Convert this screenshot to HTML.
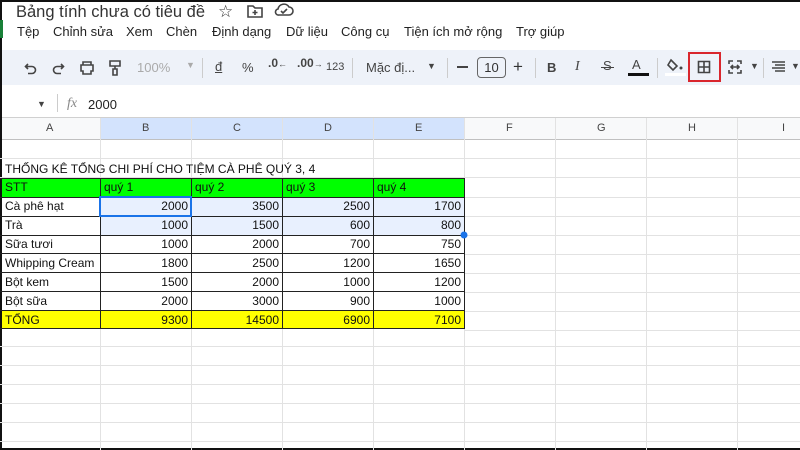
<!DOCTYPE html>
<html><head><meta charset="utf-8"><style>
*{margin:0;padding:0;box-sizing:border-box}
body{width:800px;height:450px;overflow:hidden;background:#fff;font-family:"Liberation Sans",Arial,sans-serif;position:relative;color:#1f1f1f}
.a{position:absolute;white-space:nowrap}
.tb{font-size:13px;color:#444}
.ico{stroke:#444;fill:none;stroke-width:1.6}
</style></head><body>
<div class="a" style="left:0;top:0;width:800px;height:2px;background:#111"></div>
<div class="a" style="left:0;top:0;width:2px;height:450px;background:#111"></div>
<div class="a" style="left:0;top:448px;width:800px;height:2px;background:#111"></div>
<div class="a" style="left:0;top:20px;width:3px;height:18px;background:#188038"></div>

<div class="a" style="left:16px;top:3px;font-size:16.5px;color:#333">Bảng tính chưa có tiêu đề</div>
<div class="a" style="left:218px;top:2px;font-size:17px;color:#333">☆</div>
<svg class="a" style="left:247px;top:4px" width="16" height="14"><path d="M1 2h5l2 2h7v9H1z" class="ico" stroke-width="1.5"/><path d="M8 6v5M5.5 8.5h5" class="ico" stroke-width="1.3"/></svg>
<svg class="a" style="left:274px;top:3px" width="20" height="14"><path d="M5 12h10a4 4 0 0 0 0-8 6 6 0 0 0-11 2 3 3 0 0 0 1 6z" class="ico" stroke-width="1.5"/><path d="M7 8l2 2 4-4" class="ico" stroke-width="1.3"/></svg>

<div class="a" style="left:17px;top:24px;font-size:13px;color:#222">Tệp</div>
<div class="a" style="left:53px;top:24px;font-size:13px;color:#222">Chỉnh sửa</div>
<div class="a" style="left:126px;top:24px;font-size:13px;color:#222">Xem</div>
<div class="a" style="left:166px;top:24px;font-size:13px;color:#222">Chèn</div>
<div class="a" style="left:212px;top:24px;font-size:13px;color:#222">Định dạng</div>
<div class="a" style="left:286px;top:24px;font-size:13px;color:#222">Dữ liệu</div>
<div class="a" style="left:341px;top:24px;font-size:13px;color:#222">Công cụ</div>
<div class="a" style="left:404px;top:24px;font-size:13px;color:#222">Tiện ích mở rộng</div>
<div class="a" style="left:516px;top:24px;font-size:13px;color:#222">Trợ giúp</div>

<div class="a" style="left:2px;top:50px;width:798px;height:35px;background:#eef2f9"></div>
<svg class="a" style="left:24px;top:61px" width="14" height="14"><path d="M4 3L1.5 5.5 4 8M2 5.5h6a3.5 3.5 0 0 1 0 7H4" class="ico"/></svg>
<svg class="a" style="left:51px;top:61px" width="14" height="14"><path d="M10 3l2.5 2.5L10 8M12 5.5H6a3.5 3.5 0 0 0 0 7h4" class="ico"/></svg>
<svg class="a" style="left:79px;top:60px" width="16" height="16"><path d="M4 5V2h8v3M2 5h12v6h-2v3H4v-3H2z" class="ico"/></svg>
<svg class="a" style="left:108px;top:59px" width="14" height="18"><path d="M2 2h10v5H2zM7 7v3M5 10h4v6H5z" class="ico"/></svg>
<div class="a tb" style="left:137px;top:60px;color:#aaa">100%</div>
<div class="a" style="left:186px;top:60px;font-size:9px;color:#aaa">▼</div>
<div class="a" style="left:202px;top:58px;width:1px;height:20px;background:#ccc"></div>
<div class="a tb" style="left:215px;top:59px;text-decoration:underline">đ</div>
<div class="a tb" style="left:242px;top:60px">%</div>
<div class="a" style="left:268px;top:56px;font-size:12px;color:#444;font-weight:bold">.0<span style="font-size:9px">←</span></div>
<div class="a" style="left:297px;top:56px;font-size:12px;color:#444;font-weight:bold">.00<span style="font-size:9px">→</span></div>
<div class="a" style="left:326px;top:61px;font-size:11px;color:#444">123</div>
<div class="a" style="left:352px;top:58px;width:1px;height:20px;background:#ccc"></div>
<div class="a tb" style="left:366px;top:60px">Mặc đị...</div>
<div class="a" style="left:427px;top:61px;font-size:9px;color:#444">▼</div>
<div class="a" style="left:447px;top:58px;width:1px;height:20px;background:#ccc"></div>
<div class="a" style="left:457px;top:66px;width:11px;height:2px;background:#444"></div>
<div class="a" style="left:477px;top:57px;width:29px;height:21px;border:1px solid #666;border-radius:4px;font-size:13px;text-align:center;line-height:19px;color:#333">10</div>
<div class="a" style="left:513px;top:57px;font-size:17px;color:#333">+</div>
<div class="a" style="left:535px;top:58px;width:1px;height:20px;background:#ccc"></div>
<div class="a" style="left:547px;top:60px;font-size:13px;font-weight:bold;color:#444">B</div>
<div class="a" style="left:575px;top:59px;font-size:14px;font-style:italic;font-family:'Liberation Serif',serif;color:#444">I</div>
<div class="a" style="left:603px;top:58px;font-size:13px;color:#444">S</div>
<div class="a" style="left:601px;top:67px;width:13px;height:1px;background:#444"></div>
<div class="a" style="left:632px;top:57px;font-size:13px;color:#444">A</div>
<div class="a" style="left:628px;top:73px;width:21px;height:3px;background:#111"></div>
<div class="a" style="left:657px;top:58px;width:1px;height:20px;background:#ccc"></div>
<svg class="a" style="left:667px;top:58px" width="18" height="14"><path d="M4 2l6 6-4 4-5-5z" class="ico" stroke-width="1.5"/><circle cx="14" cy="10" r="1.5" fill="#444"/></svg>
<div class="a" style="left:665px;top:73px;width:21px;height:3px;background:#fff"></div>
<div class="a" style="left:688px;top:52px;width:33px;height:30px;border:2px solid #d9262d"></div>
<svg class="a" style="left:697px;top:60px" width="14" height="14"><path d="M1.5 1.5h11v11h-11zM7 1.5v11M1.5 7h11" class="ico" stroke-width="1.4"/></svg>
<svg class="a" style="left:727px;top:59px" width="16" height="16"><path d="M2 5V2h4M10 2h4v3M2 11v3h4M10 14h4v-3M4 8h8M10 6l2 2-2 2M6 6L4 8l2 2" class="ico" stroke-width="1.3"/></svg>
<div class="a" style="left:750px;top:61px;font-size:9px;color:#444">▼</div>
<div class="a" style="left:763px;top:58px;width:1px;height:20px;background:#ccc"></div>
<svg class="a" style="left:771px;top:60px" width="16" height="14"><path d="M1 2h13M4 5h10M1 8h13M4 11h10" class="ico" stroke-width="1.4"/></svg>
<div class="a" style="left:791px;top:61px;font-size:9px;color:#444">▼</div>

<div class="a" style="left:37px;top:99px;font-size:9px;color:#444">▼</div>
<div class="a" style="left:57px;top:94px;width:1px;height:18px;background:#ccc"></div>
<div class="a" style="left:67px;top:96px;font-size:14px;font-style:italic;font-family:'Liberation Serif',serif;color:#888">fx</div>
<div class="a" style="left:88px;top:97px;font-size:13px;color:#222">2000</div>
<div class="a" style="left:2px;top:117px;width:798px;height:1px;background:#d0d0d0"></div>

<div class="a" style="left:2px;top:118px;width:798px;height:21px;background:#f8f9fa"></div>
<div class="a" style="left:100px;top:118px;width:365px;height:21px;background:#d3e3fd"></div>
<div class="a" style="left:2px;top:139px;width:798px;height:1px;background:#c0c0c0"></div>

<svg class="a" style="left:0;top:118px" width="800" height="332">
<g stroke="#e2e2e2" stroke-width="1">
<line x1="100.5" y1="0" x2="100.5" y2="332"/><line x1="191.5" y1="0" x2="191.5" y2="332"/><line x1="282.5" y1="0" x2="282.5" y2="332"/><line x1="373.5" y1="0" x2="373.5" y2="332"/><line x1="464.5" y1="0" x2="464.5" y2="332"/><line x1="555.5" y1="0" x2="555.5" y2="332"/><line x1="646.5" y1="0" x2="646.5" y2="332"/><line x1="737.5" y1="0" x2="737.5" y2="332"/>
<line x1="0" y1="40.5" x2="800" y2="40.5"/><line x1="0" y1="59.5" x2="800" y2="59.5"/>
<line x1="0" y1="228.5" x2="800" y2="228.5"/><line x1="0" y1="247.5" x2="800" y2="247.5"/><line x1="0" y1="266.5" x2="800" y2="266.5"/><line x1="0" y1="285.5" x2="800" y2="285.5"/><line x1="0" y1="304.5" x2="800" y2="304.5"/><line x1="0" y1="323.5" x2="800" y2="323.5"/>
<line x1="465" y1="79.5" x2="800" y2="79.5"/><line x1="465" y1="98.5" x2="800" y2="98.5"/><line x1="465" y1="117.5" x2="800" y2="117.5"/><line x1="465" y1="136.5" x2="800" y2="136.5"/><line x1="465" y1="155.5" x2="800" y2="155.5"/><line x1="465" y1="174.5" x2="800" y2="174.5"/><line x1="465" y1="193.5" x2="800" y2="193.5"/><line x1="465" y1="212.5" x2="800" y2="212.5"/>
</g></svg>
<div class="a" style="left:0;top:118px;width:800px;font-size:11px;color:#444;line-height:21px">
<span class="a" style="left:46px">A</span><span class="a" style="left:142px">B</span><span class="a" style="left:233px">C</span><span class="a" style="left:324px">D</span><span class="a" style="left:415px">E</span><span class="a" style="left:506px">F</span><span class="a" style="left:597px">G</span><span class="a" style="left:688px">H</span><span class="a" style="left:782px">I</span></div>

<div class="a" style="left:5px;top:162px;font-size:12px;color:#111">THỐNG KÊ TỔNG CHI PHÍ CHO TIỆM CÀ PHÊ QUÝ 3, 4</div>

<div class="a" style="left:100px;top:197px;width:365px;height:38px;background:#e8f0fe"></div>
<div class="a" style="left:2px;top:178px;width:463px;height:19px;background:#00ff00"></div>
<div class="a" style="left:2px;top:310px;width:463px;height:18px;background:#ffff00"></div>
<svg class="a" style="left:0;top:178px" width="470" height="152">
<g stroke="#222" stroke-width="1">
<line x1="0" y1="0.5" x2="465" y2="0.5"/><line x1="0" y1="19.5" x2="465" y2="19.5"/><line x1="0" y1="38.5" x2="465" y2="38.5"/><line x1="0" y1="57.5" x2="465" y2="57.5"/><line x1="0" y1="75.5" x2="465" y2="75.5"/><line x1="0" y1="94.5" x2="465" y2="94.5"/><line x1="0" y1="113.5" x2="465" y2="113.5"/><line x1="0" y1="132.5" x2="465" y2="132.5"/><line x1="0" y1="150.5" x2="465" y2="150.5"/>
<line x1="100.5" y1="0" x2="100.5" y2="151"/><line x1="191.5" y1="0" x2="191.5" y2="151"/><line x1="282.5" y1="0" x2="282.5" y2="151"/><line x1="373.5" y1="0" x2="373.5" y2="151"/><line x1="464.5" y1="0" x2="464.5" y2="151"/>
</g>
<rect x="100" y="19" width="91" height="19" fill="none" stroke="#1a73e8" stroke-width="2"/>
<circle cx="464" cy="57" r="3.5" fill="#1a73e8"/>
</svg>

<div class="a" style="left:0;top:178px;width:470px;font-size:12px;color:#111">
<div style="position:relative;height:19px;line-height:19px"><span class="a" style="left:5px">STT</span><span class="a" style="left:104px">quý 1</span><span class="a" style="left:195px">quý 2</span><span class="a" style="left:286px">quý 3</span><span class="a" style="left:377px">quý 4</span></div>
<div style="position:relative;height:19px;line-height:19px"><span class="a" style="left:5px">Cà phê hạt</span><span class="a" style="right:282px">2000</span><span class="a" style="right:191px">3500</span><span class="a" style="right:100px">2500</span><span class="a" style="right:9px">1700</span></div>
<div style="position:relative;height:19px;line-height:19px"><span class="a" style="left:5px">Trà</span><span class="a" style="right:282px">1000</span><span class="a" style="right:191px">1500</span><span class="a" style="right:100px">600</span><span class="a" style="right:9px">800</span></div>
<div style="position:relative;height:19px;line-height:19px"><span class="a" style="left:5px">Sữa tươi</span><span class="a" style="right:282px">1000</span><span class="a" style="right:191px">2000</span><span class="a" style="right:100px">700</span><span class="a" style="right:9px">750</span></div>
<div style="position:relative;height:19px;line-height:19px"><span class="a" style="left:5px">Whipping Cream</span><span class="a" style="right:282px">1800</span><span class="a" style="right:191px">2500</span><span class="a" style="right:100px">1200</span><span class="a" style="right:9px">1650</span></div>
<div style="position:relative;height:19px;line-height:19px"><span class="a" style="left:5px">Bột kem</span><span class="a" style="right:282px">1500</span><span class="a" style="right:191px">2000</span><span class="a" style="right:100px">1000</span><span class="a" style="right:9px">1200</span></div>
<div style="position:relative;height:19px;line-height:19px"><span class="a" style="left:5px">Bột sữa</span><span class="a" style="right:282px">2000</span><span class="a" style="right:191px">3000</span><span class="a" style="right:100px">900</span><span class="a" style="right:9px">1000</span></div>
<div style="position:relative;height:18px;line-height:18px"><span class="a" style="left:5px">TỔNG</span><span class="a" style="right:282px">9300</span><span class="a" style="right:191px">14500</span><span class="a" style="right:100px">6900</span><span class="a" style="right:9px">7100</span></div>
</div>
</body></html>
